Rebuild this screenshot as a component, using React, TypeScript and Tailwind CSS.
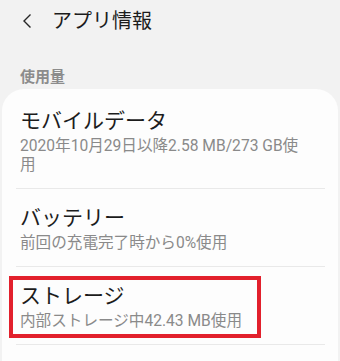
import React from 'react'

const font = { fontFamily: '"Noto Sans CJK JP", "Noto Sans", sans-serif' }
const subFont = { fontFamily: 'Roboto, "Noto Sans CJK JP", sans-serif' }

interface UsageRowProps {
  title: string
  detail: string
  highlight?: boolean
  first?: boolean
}

function UsageRow({ title, detail, highlight, first }: UsageRowProps) {
  return (
    <div className={`relative ${first ? 'pt-4' : 'pt-[13px]'} pb-[13px]`}>
      <div className="pl-[18px]">
        <div className="text-[21px] leading-[28px] text-[#1c1c1c]">{title}</div>
        <div className="mt-1 w-[288px] text-[15.6px] leading-[19px] text-[#8a8a8a]" style={subFont}>
          {detail}
        </div>
      </div>
      {highlight && (
        <div className="absolute left-[7px] top-[9px] w-[252px] h-[62px] border-4 border-[#e2202c]" />
      )}
    </div>
  )
}

function Divider() {
  return <div className="ml-[14px] w-[309px] h-px bg-[#e9e9e9]" />
}

export default function App() {
  return (
    <div className="w-[340px] h-[361px] overflow-hidden bg-[#f2f2f2]" style={font}>
      <div className="flex items-center h-[40px] pl-[22px]">
        <svg width="10" height="16" viewBox="0 0 10 16" className="mt-[1px]">
          <path d="M8.5 1.5 L2 8 L8.5 14.5" fill="none" stroke="#262626" strokeWidth="1.4" />
        </svg>
        <span className="ml-5 text-[20px] text-[#1c1c1c] leading-none">アプリ情報</span>
      </div>
      <div className="h-[49px] pl-5 pt-[23px]">
        <span className="text-[15px] font-bold leading-[20px] text-[#8c8c8c]">使用量</span>
      </div>
      <div className="mx-[2px] rounded-t-[22px] bg-[#fdfdfd] pb-4">
        <UsageRow first title="モバイルデータ" detail="2020年10月29日以降2.58 MB/273 GB使用" />
        <Divider />
        <UsageRow title="バッテリー" detail="前回の充電完了時から0%使用" />
        <Divider />
        <UsageRow highlight title="ストレージ" detail="内部ストレージ中42.43 MB使用" />
        <Divider />
      </div>
    </div>
  )
}
